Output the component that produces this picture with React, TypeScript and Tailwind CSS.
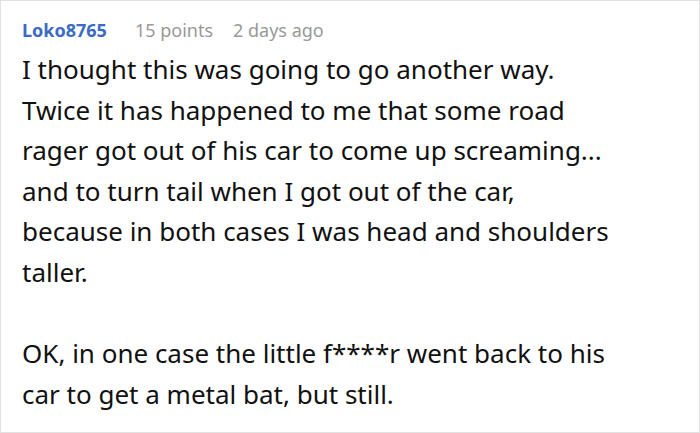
const lines = [
  "I thought this was going to go another way.",
  "Twice it has happened to me that some road",
  "rager got out of his car to come up screaming...",
  "and to turn tail when I got out of the car,",
  "because in both cases I was head and shoulders",
  "taller.",
];

const lines2 = ["OK, in one case the little f****r went back to his", "car to get a metal bat, but still."];

export default function App() {
  return (
    <div className="h-[433px] w-[700px] overflow-hidden border border-[#e2e2e2] bg-white px-[21px] pt-[16px] font-['Noto_Sans',sans-serif]">
      <div className="flex items-center text-[18px] leading-[27px]">
        <span className="font-bold text-[#3b6cc1]">Loko8765</span>
        <span className="ml-[28px] text-[#999999]">15 points</span>
        <span className="ml-[20px] text-[#999999]">2 days ago</span>
      </div>
      <div className="mt-[5px] text-[26px] leading-[40.6px] text-[#111111]">
        <p className="whitespace-nowrap">
          {lines.map((l, i) => (
            <span key={i}>
              {l}
              <br />
            </span>
          ))}
        </p>
        <p className="mt-[40.6px] whitespace-nowrap">
          {lines2.map((l, i) => (
            <span key={i}>
              {l}
              <br />
            </span>
          ))}
        </p>
      </div>
    </div>
  );
}
